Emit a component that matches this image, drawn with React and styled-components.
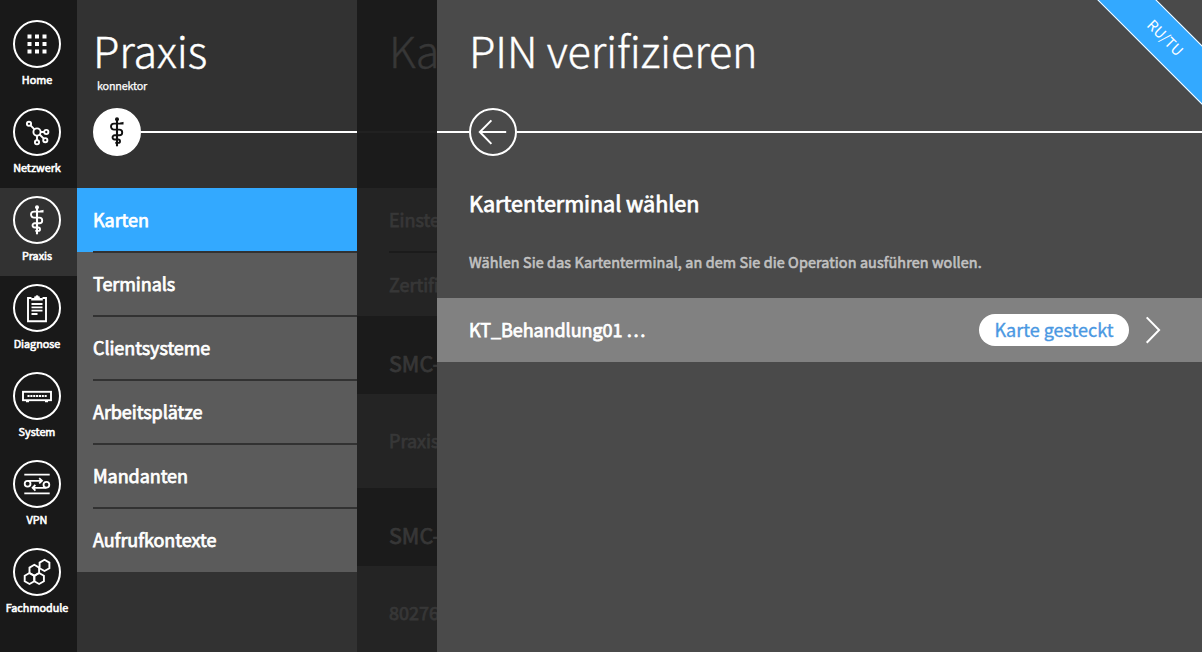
import React from "react";
import styled, { createGlobalStyle, css } from "styled-components";

const GlobalStyle = createGlobalStyle`
  * { box-sizing: border-box; }
  body {
    margin: 0;
    background: #4a4a4a;
    color: #fff;
    font-family: "Noto Sans CJK SC", "Noto Sans", sans-serif;
    overflow: hidden;
  }
`;

const strong = css`
  font-weight: 400;
  -webkit-text-stroke: ${(p) => p.$stroke || 0.75}px currentColor;
`;

const Shell = styled.div`
  position: relative;
  display: flex;
  width: 100%;
  height: 100vh;
  overflow: hidden;
`;

const Rail = styled.nav`
  flex: 0 0 77px;
  padding-top: 12px;
  background: #191919;
`;

const RailItem = styled.a`
  display: flex;
  flex-direction: column;
  align-items: center;
  height: 88px;
  padding: 8px 3px 0 0;
  background: ${(p) => (p.$active ? "#323232" : "transparent")};
`;

const Disc = styled.span`
  flex: none;
  display: block;
  width: 48px;
  height: 48px;
  border-radius: 50%;
  background: ${(p) => (p.$filled ? "#fff" : "transparent")};
  border: 2px solid #fff;
  color: ${(p) => (p.$filled ? "#111" : "#fff")};

  svg {
    display: block;
    width: 44px;
    height: 44px;
  }
`;

const RailLabel = styled.span`
  font-size: 10.8px;
  line-height: 16px;
  margin-top: 3px;
  white-space: nowrap;
  ${strong}
`;

const Column = styled.section`
  flex: 0 0 ${(p) => p.$width}px;
  background: #323232;
  overflow: hidden;
`;

const Backdrop = styled.section`
  flex: 0 0 80px;
  background: #1b1b1b;
  color: #373737;
  overflow: hidden;
`;

const Main = styled.main`
  flex: 1;
  min-width: 0;
  background: #4a4a4a;
`;

const Header = styled.header`
  display: flex;
  flex-direction: column;
  height: 188px;
  padding-top: 22px;
`;

const Title = styled.h1`
  margin: -1px 0 1px ${(p) => p.$indent}px;
  font-size: 43.2px;
  font-weight: 300;
  line-height: 56px;
  letter-spacing: -0.15px;
  white-space: nowrap;
  -webkit-text-stroke: 0.4px currentColor;
`;

const Subtitle = styled.div`
  height: 16px;
  margin: -1px 0 1px 20px;
  font-size: 10.8px;
  line-height: 16px;
  letter-spacing: -0.2px;
  -webkit-text-stroke: 0.25px currentColor;
`;

const Rule = styled.div`
  display: flex;
  align-items: center;
  margin-top: 14px;
  height: 48px;
`;

const Line = styled.span`
  flex: ${(p) => (p.$lead ? `0 0 ${p.$lead}px` : 1)};
  height: 2px;
  background: ${(p) => p.$tone || "#fff"};
`;

const Gap = styled.span`
  flex: 0 0 16px;
`;

const MenuItem = styled.a`
  display: block;
  height: 64px;
  padding-left: 16px;
  background: ${(p) => (p.$active ? "#33a9ff" : "#5b5b5b")};
`;

const MenuText = styled.span`
  display: block;
  height: 64px;
  font-size: 18px;
  line-height: 60px;
  letter-spacing: -0.06px;
  border-top: 1px solid ${(p) => (p.$first ? "transparent" : "#323232")};
  border-bottom: 1px solid ${(p) => (p.$last ? "transparent" : "#323232")};
  ${strong}
`;

const DimRow = styled.div`
  height: ${(p) => p.$height}px;
  padding-left: 32px;
  background: #242424;
`;

const DimText = styled.div`
  height: 100%;
  font-size: 18px;
  line-height: ${(p) => p.$line}px;
  white-space: nowrap;
  ${strong}
  ${(p) => p.$top && css`border-top: 1px solid #1b1b1b;`}
  ${(p) => p.$bottom && css`border-bottom: 1px solid #1b1b1b;`}
`;

const DimHeading = styled.div`
  height: 78px;
  padding: 17px 0 0 32px;
  font-size: 21.6px;
  line-height: 60px;
  white-space: nowrap;
  ${strong}
`;

const SectionTitle = styled.h2`
  margin: -1px 0 0 32px;
  font-size: 21.6px;
  line-height: 32px;
  letter-spacing: -0.05px;
  ${strong}
`;

const Hint = styled.p`
  margin: 30px 0 24px 32px;
  color: #c2c2c2;
  font-size: 14.4px;
  line-height: 25px;
  letter-spacing: 0.1px;
  ${strong}
`;

const TerminalRow = styled.div`
  display: flex;
  align-items: center;
  height: 64px;
  padding: 0 41px 0 32px;
  background: #818181;
`;

const TerminalName = styled.span`
  flex: 1;
  font-size: 18px;
  line-height: 32px;
  letter-spacing: -0.06px;
  margin-top: -2px;
  ${strong}
`;

const Pill = styled.span`
  width: 150px;
  height: 32px;
  border-radius: 16px;
  background: #fff;
  color: #4a98e2;
  font-size: 18px;
  line-height: 31px;
  text-align: center;
  white-space: nowrap;
  -webkit-text-stroke: 0.35px currentColor;
`;

const Chevron = styled.svg`
  display: block;
  width: 16px;
  height: 28px;
  margin-left: 16px;
`;

const Corner = styled.div`
  position: absolute;
  top: 0;
  right: 0;
  width: 110px;
  height: 110px;
  overflow: hidden;
`;

const Ribbon = styled.div`
  position: absolute;
  top: 17px;
  right: -63px;
  width: 200px;
  height: 42px;
  border: 1px solid #fff;
  background: #33a9ff;
  font-size: 14.4px;
  line-height: 38px;
  text-align: center;
  transform: rotate(45deg);
`;

const icons = {
  home: (
    <g fill="currentColor">
      {[12.5, 20, 27.5].map((y) =>
        [12.5, 20, 27.5].map((x) => <rect key={x + "-" + y} x={x} y={y} width="4" height="4" />)
      )}
    </g>
  ),
  network: (
    <g fill="none" stroke="currentColor" strokeWidth="1.9">
      <circle cx="22" cy="22" r="3.6" />
      <circle cx="14" cy="13.8" r="2.1" />
      <circle cx="31.3" cy="22" r="2.1" />
      <circle cx="30.3" cy="30.2" r="2.1" />
      <circle cx="22" cy="32.3" r="2.1" />
      <path d="M15.6 15.4l3.8 3.9M25.6 22h3.6M24.6 24.5l4.2 4.2M22 25.6v4.6" />
    </g>
  ),
  staff: (
    <g fill="none" stroke="currentColor" strokeWidth="1.9">
      <path d="M22 8v28.3" strokeWidth="2.1" />
      <circle cx="22" cy="9.3" r="2" fill="currentColor" stroke="none" />
      <path d="M28.5 13.6H19a3 3 0 0 0 0 6h5.4a2.8 2.8 0 0 1 0 5.6h-4.7a2.1 2.1 0 0 0 0 4.3h3.6a1.7 1.7 0 0 1 0 3.4h-3" />
      <path d="M25 13.2l3.5-.8" strokeWidth="1" />
    </g>
  ),
  clipboard: (
    <g fill="none" stroke="currentColor">
      <path d="M16.5 12H13v23.2h18V12h-3.5" strokeWidth="1.9" />
      <path d="M16.2 14.5v-2.6h3v-1.3h1.2a1.7 1.7 0 0 1 3.3 0h1.1v1.3h3v2.6z" fill="currentColor" stroke="none" />
      <path d="M16.5 18h11M16.5 21.3h11M16.5 24.6h11M16.5 28h6" strokeWidth="1.8" />
    </g>
  ),
  device: (
    <g fill="none" stroke="currentColor">
      <rect x="8" y="17.8" width="28" height="8.4" strokeWidth="1.9" />
      <path d="M12.5 22h19.2" strokeWidth="2" strokeDasharray="2.1 0.75" />
      <path d="M11 27.6h3M30 27.6h3" strokeWidth="1.4" />
    </g>
  ),
  vpn: (
    <g fill="none" stroke="currentColor" strokeWidth="1.8">
      <path d="M9.3 12.7h25.4M9.3 31.3h25.4" />
      <circle cx="12.6" cy="21.7" r="2.9" />
      <circle cx="31.4" cy="22.7" r="2.9" />
      <path d="M12.6 18.8h14M24.2 16.2l2.8 2.6-2.8 2.6M31.4 25.8H17.8M20.4 23l-2.8 2.8 2.8 2.8" />
    </g>
  ),
  modules: (
    <g fill="none" stroke="currentColor" strokeWidth="1.9">
      <path d="M29.5 9.8l4.9 2.8v5.6L29.5 21l-4.9-2.8v-5.6z" />
      <path d="M19.3 14.8l4.8 2.8v5.4l-4.8 2.8-4.8-2.8v-5.4z" />
      <path d="M14.5 23l4.8 2.8v5.4L14.5 34l-4.8-2.8v-5.4z" />
      <path d="M24.1 23l4.8 2.8v5.4L24.1 34l-4.8-2.8v-5.4z" />
    </g>
  ),
  back: (
    <path d="M20.4 10.4L8.8 22l11.6 11.9M8.8 22h26.4" fill="none" stroke="currentColor" strokeWidth="2" />
  ),
};

function Icon({ name }) {
  return <svg viewBox="0 0 44 44" aria-hidden="true">{icons[name]}</svg>;
}

const rail = [
  ["Home", "home"],
  ["Netzwerk", "network"],
  ["Praxis", "staff"],
  ["Diagnose", "clipboard"],
  ["System", "device"],
  ["VPN", "vpn"],
  ["Fachmodule", "modules"],
];

const menu = ["Karten", "Terminals", "Clientsysteme", "Arbeitsplätze", "Mandanten", "Aufrufkontexte"];

export default function App() {
  return (
    <Shell>
      <GlobalStyle />
      <Rail>
        {rail.map(([label, icon]) => (
          <RailItem key={label} $active={label === "Praxis"}>
            <Disc><Icon name={icon} /></Disc>
            <RailLabel $stroke={0.6}>{label}</RailLabel>
          </RailItem>
        ))}
      </Rail>

      <Column $width={280}>
        <Header>
          <Title $indent={16}>Praxis</Title>
          <Subtitle>konnektor</Subtitle>
          <Rule>
            <Gap />
            <Disc $filled><Icon name="staff" /></Disc>
            <Line />
          </Rule>
        </Header>
        {menu.map((label, i) => (
          <MenuItem key={label} $active={i === 0}>
            <MenuText $first={i === 0} $last={i === menu.length - 1}>{label}</MenuText>
          </MenuItem>
        ))}
      </Column>

      <Backdrop>
        <Header>
          <Title $indent={32}>Karten</Title>
          <Subtitle />
          <Rule><Line $tone="#212121" /></Rule>
        </Header>
        <DimRow $height={64}><DimText $line={62} $bottom>Einstellungen</DimText></DimRow>
        <DimRow $height={64}><DimText $line={62} $top>Zertifikate</DimText></DimRow>
        <DimHeading>SMC-B</DimHeading>
        <DimRow $height={94}><DimText $line={92}>Praxis</DimText></DimRow>
        <DimHeading>SMC-KT</DimHeading>
        <DimRow $height={94}><DimText $line={92}>80276</DimText></DimRow>
      </Backdrop>

      <Main>
        <Header>
          <Title $indent={32}>PIN verifizieren</Title>
          <Subtitle />
          <Rule>
            <Line $lead={32} />
            <Disc><Icon name="back" /></Disc>
            <Line />
          </Rule>
        </Header>
        <SectionTitle>Kartenterminal wählen</SectionTitle>
        <Hint $stroke={0.6}>Wählen Sie das Kartenterminal, an dem Sie die Operation ausführen wollen.</Hint>
        <TerminalRow>
          <TerminalName>KT_Behandlung01 …</TerminalName>
          <Pill>Karte gesteckt</Pill>
          <Chevron viewBox="0 0 16 28" aria-hidden="true">
            <path d="M1.7 1.4L14.1 14 1.7 26.8" fill="none" stroke="#fff" strokeWidth="2" />
          </Chevron>
        </TerminalRow>
      </Main>

      <Corner><Ribbon>RU/TU</Ribbon></Corner>
    </Shell>
  );
}
